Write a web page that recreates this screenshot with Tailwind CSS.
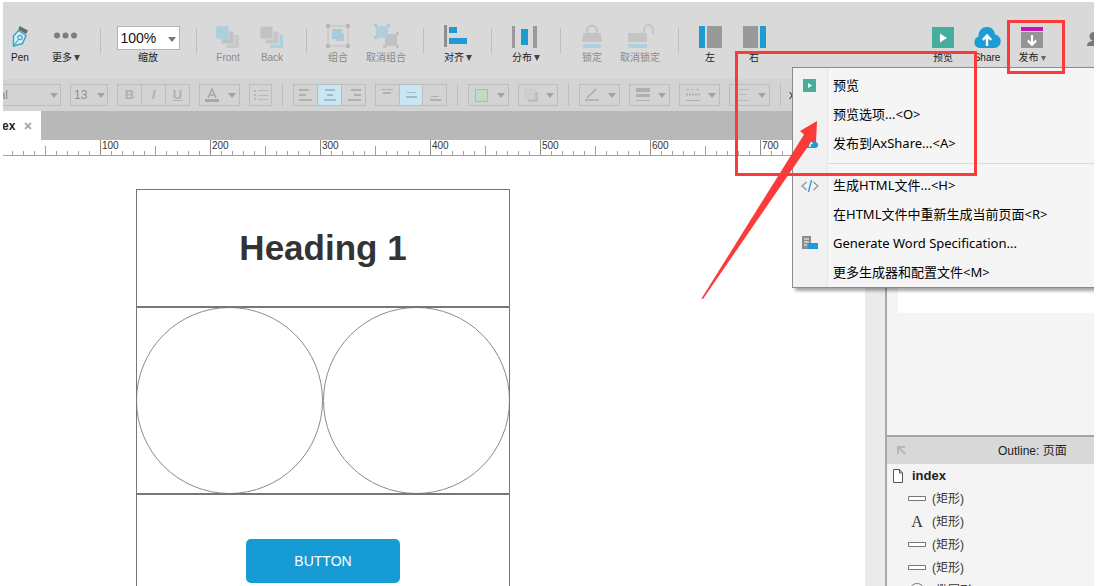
<!DOCTYPE html>
<html lang="zh-CN">
<head>
<meta charset="utf-8">
<title>index</title>
<script src="https://cdn.jsdelivr.net/npm/@tailwindcss/browser@4"></script>
</head>
<body class="h-screen overflow-hidden bg-white pt-[2px] pr-[5px] pl-[3px] font-['Liberation_Sans','Noto_Sans_CJK_SC',sans-serif] text-[#222]">
<div class="relative flex h-full flex-col overflow-hidden">

  <!-- Main toolbar -->
  <header class="flex h-[77px] shrink-0 items-start bg-[#d9d9d9] pt-[20px] text-[10px] leading-[14px] whitespace-nowrap">
    <button class="flex w-[34px] shrink-0 flex-col items-center gap-[2px]">
      <svg class="h-[27px] w-[20px]" viewBox="0 0 20 27"><path d="M9.500 4l8.500 4.500-2 3.500-7.500-4.500z" fill="#6b6b6b"/><path d="M8.500 8.500L3.500 14 3.500 24l9-2.500 3.500-8z" fill="#d9eef5" stroke="#3aa6cf" stroke-width="1.500"/><path d="M3.500 24l5-6.500" stroke="#3aa6cf" stroke-width="1.200"/><circle cx="10" cy="15.500" r="2.200" fill="none" stroke="#3aa6cf" stroke-width="1.200"/></svg>
      <span>Pen</span>
    </button>
    <button class="flex w-[58px] shrink-0 flex-col items-center gap-[2px]">
      <svg class="h-[27px] w-[24px]" viewBox="0 0 24 27" fill="#7c7c7c"><circle cx="3" cy="13.500" r="3"/><circle cx="11.500" cy="13.500" r="3"/><circle cx="20" cy="13.500" r="3"/></svg>
      <span class="flex items-center gap-[2px]">更多<svg class="h-[6px] w-[6px]" viewBox="0 0 6 6"><path d="M0 0h6L3 6z" fill="#444"/></svg></span>
    </button>
    <div class="flex w-[11px] shrink-0 justify-center pt-[6px]"><i class="h-[25px] w-px bg-[#bdbdbd]"></i></div>
    <div class="flex w-[84px] shrink-0 flex-col items-center pt-[4px]">
      <div class="relative">
        <select id="zoom" class="h-[24px] w-[63px] appearance-none border border-[#b4b4b4] bg-white pl-[3px] text-[14px] text-[#111]"><option>100%</option></select>
        <svg class="pointer-events-none absolute top-[11px] right-[4px] h-[5px] w-[8px]" viewBox="0 0 8 5"><path d="M0 0h8L4 5z" fill="#777"/></svg>
      </div>
      <label for="zoom" class="mt-[1px]">缩放</label>
    </div>
    <div class="flex w-[12px] shrink-0 justify-center pt-[6px]"><i class="h-[25px] w-px bg-[#bdbdbd]"></i></div>
    <button class="flex w-[52px] shrink-0 flex-col items-center gap-[2px] text-[#8a8a8a]">
      <svg class="h-[27px] w-[24px]" viewBox="0 0 24 27"><path d="M10 13h13v13H10z" fill="#c9c9c9"/><path d="M5 9h13v13H5z" fill="#c1c1c1" stroke="#d9d9d9"/><path d="M0 4h13v13H0z" fill="#a9cfe0" stroke="#d9d9d9" stroke-width=".5"/></svg>
      <span>Front</span>
    </button>
    <button class="flex w-[36px] shrink-0 flex-col items-center gap-[2px] text-[#8a8a8a]">
      <svg class="h-[27px] w-[24px]" viewBox="0 0 24 27"><path d="M10 13h13v13H10z" fill="#a9d3e3"/><path d="M5 9h14v13H5z" fill="#c6c6c6" stroke="#d9d9d9"/><path d="M0 4h13v13H0z" fill="#c2c2c2" stroke="#d9d9d9"/></svg>
      <span>Back</span>
    </button>
    <div class="flex w-[32px] shrink-0 justify-center pt-[6px]"><i class="h-[25px] w-px bg-[#bdbdbd]"></i></div>
    <button class="flex w-[32px] shrink-0 flex-col items-center gap-[2px] text-[#8a8a8a]">
      <svg class="h-[27px] w-[24px]" viewBox="0 0 24 27"><path d="M2 4h20v20H2z" fill="none" stroke="#bfbfbf"/><g fill="#b8b8b8"><path d="M0 2h4v4H0zM20 2h4v4h-4zM0 22h4v4H0zM20 22h4v4h-4z"/></g><path d="M10 11h8v8h-8z" fill="#bcc7cc"/><path d="M6 7h10v10H6z" fill="#a6cddd"/></svg>
      <span>组合</span>
    </button>
    <button class="flex w-[64px] shrink-0 flex-col items-center gap-[2px] text-[#8a8a8a]">
      <svg class="h-[27px] w-[26px]" viewBox="0 0 26 27"><path d="M12 12h12v12H12z" fill="#c2c2c2"/><path d="M3 4h12v12H3z" fill="#b1d0dc"/><g fill="#b5c6cd"><path d="M1 2h3v3H1zM14 2h3v3h-3zM1 14h3v3H1zM14 14h3v3h-3z"/></g><path d="M23 10h3v3h-3zM10 23h3v3h-3zM23 23h3v3h-3z" fill="#bfbfbf"/></svg>
      <span>取消组合</span>
    </button>
    <div class="flex w-[11px] shrink-0 justify-center pt-[6px]"><i class="h-[25px] w-px bg-[#bdbdbd]"></i></div>
    <button class="flex w-[58px] shrink-0 flex-col items-center gap-[2px]">
      <svg class="h-[27px] w-[28px]" viewBox="0 0 28 27"><path d="M0 3h3v22H0z" fill="#8f8f8f"/><path d="M5 5h8v6H5zM5 16h18v6H5z" fill="#1e9bd2"/></svg>
      <span class="flex items-center gap-[2px]">对齐<svg class="h-[6px] w-[6px]" viewBox="0 0 6 6"><path d="M0 0h6L3 6z" fill="#444"/></svg></span>
    </button>
    <div class="flex w-[9px] shrink-0 justify-center pt-[6px]"><i class="h-[25px] w-px bg-[#bdbdbd]"></i></div>
    <button class="flex w-[60px] shrink-0 flex-col items-center gap-[2px]">
      <svg class="h-[27px] w-[28px]" viewBox="0 0 28 27"><path d="M0 4h3v22H0zM21 4h4v22h-4z" fill="#999"/><path d="M9 7h7v16H9z" fill="#1e9bd2"/></svg>
      <span class="flex items-center gap-[2px]">分布<svg class="h-[6px] w-[6px]" viewBox="0 0 6 6"><path d="M0 0h6L3 6z" fill="#444"/></svg></span>
    </button>
    <div class="flex w-[9px] shrink-0 justify-center pt-[6px]"><i class="h-[25px] w-px bg-[#bdbdbd]"></i></div>
    <button class="flex w-[54px] shrink-0 flex-col items-center gap-[2px] text-[#8a8a8a]">
      <svg class="h-[27px] w-[22px]" viewBox="0 0 22 27"><path d="M6 12V9a5 5.500 0 0 1 10 0v3" fill="none" stroke="#c3c3c3" stroke-width="2"/><path d="M2 11h18l1 9H1z" fill="#c4c4c4"/><path d="M2 22h18v4H2z" fill="#afd0dc"/></svg>
      <span>锁定</span>
    </button>
    <button class="flex w-[42px] shrink-0 flex-col items-center gap-[2px] text-[#8a8a8a]">
      <svg class="h-[27px] w-[28px]" viewBox="0 0 28 27"><path d="M18 12V8a4.500 5 0 0 1 9 0v4" fill="none" stroke="#c6c6c6" stroke-width="2"/><path d="M2 11h19v9H2z" fill="#c4c4c4"/><path d="M2 22h19v4H2z" fill="#afd0dc"/></svg>
      <span>取消锁定</span>
    </button>
    <div class="flex w-[34px] shrink-0 justify-center pt-[6px]"><i class="h-[25px] w-px bg-[#bdbdbd]"></i></div>
    <button class="flex w-[30px] shrink-0 flex-col items-center gap-[2px]">
      <svg class="h-[27px] w-[24px]" viewBox="0 0 24 27"><path d="M1 4h6v22H1z" fill="#1e9bd2"/><path d="M9 4h15v22H9z" fill="#999"/></svg>
      <span>左</span>
    </button>
    <button class="flex w-[58px] shrink-0 flex-col items-center gap-[2px]">
      <svg class="h-[27px] w-[24px]" viewBox="0 0 24 27"><path d="M1 4h15v22H1z" fill="#999"/><path d="M18 4h6v22h-6z" fill="#1e9bd2"/></svg>
      <span>右</span>
    </button>
    <div class="flex-1"></div>
    <button class="flex w-[44px] shrink-0 flex-col items-center gap-[2px]">
      <svg class="h-[27px] w-[22px]" viewBox="0 0 22 27"><path d="M0 5h22v21H0z" fill="#47ad9c"/><path d="M8 11.500l7 4.500-7 4.500z" fill="#fff"/></svg>
      <span>预览</span>
    </button>
    <button class="flex w-[44px] shrink-0 flex-col items-center gap-[2px]">
      <svg class="h-[27px] w-[28px]" viewBox="0 0 28 27"><path d="M6 26a6 6 0 0 1-.5-11.500C5.500 8 9.500 5 14 5c4 0 7.500 2.500 8 7.500A6.800 6.800 0 0 1 21.500 26z" fill="#1e9bd2"/><path d="M14 24v-9M9.800 18l4.200-4.500 4.200 4.500" fill="none" stroke="#fff" stroke-width="2.400"/></svg>
      <span>Share</span>
    </button>
    <button class="flex w-[46px] shrink-0 flex-col items-center gap-[2px]">
      <svg class="h-[27px] w-[22px]" viewBox="0 0 22 27"><path d="M0 5h22v4H0z" fill="#c513b4"/><path d="M0 10h22v16H0z" fill="#949494"/><path d="M11 13v9M6.800 18.500l4.200 4.200 4.200-4.200" fill="none" stroke="#fff" stroke-width="2.200"/></svg>
      <span class="flex items-center gap-[2px]">发布<svg class="h-[5px] w-[5px]" viewBox="0 0 6 6"><path d="M0 0h6L3 6z" fill="#666"/></svg></span>
    </button>
    <button class="flex w-[39px] shrink-0 justify-end overflow-hidden" aria-label="Account">
      <svg class="h-[27px] w-[7px]" viewBox="0 0 7 27"><circle cx="7" cy="14.500" r="4.500" fill="#777"/><path d="M0 24c0-4 3-5 7-5v5z" fill="#777"/></svg>
    </button>
  </header>

  <!-- Formatting bar -->
  <div class="flex h-[32px] shrink-0 items-center gap-[9px] bg-[#d3d3d3] text-[13px] text-[#8f8f8f]">
    <div class="relative -ml-[26px] shrink-0">
      <select aria-label="Font" class="block h-[22px] w-[84px] appearance-none border border-[#bcbcbc] pl-[6px] text-[12px]"><option>Arial</option></select>
      <svg class="pointer-events-none absolute top-[9px] right-[3px] h-[5px] w-[8px]" viewBox="0 0 8 5"><path d="M0 0h8L4 5z" fill="#a3a3a3"/></svg>
    </div>
    <div class="relative shrink-0">
      <select aria-label="Size" class="block h-[22px] w-[38px] appearance-none border border-[#bcbcbc] pl-[3px] text-[12px]"><option>13</option></select>
      <svg class="pointer-events-none absolute top-[9px] right-[3px] h-[5px] w-[8px]" viewBox="0 0 8 5"><path d="M0 0h8L4 5z" fill="#a3a3a3"/></svg>
    </div>
    <div class="flex h-[22px] w-[73px] shrink-0 divide-x divide-[#bcbcbc] border border-[#bcbcbc] leading-[20px] text-[#b0b0b0]">
      <button class="flex-1 font-bold">B</button>
      <button class="flex-1 font-bold italic">I</button>
      <button class="flex-1 font-bold underline">U</button>
    </div>
    <button aria-label="Text color" class="flex h-[22px] w-[41px] shrink-0 items-center justify-between border border-[#bcbcbc] pr-[3px] pl-[5px]">
      <svg class="h-[16px] w-[14px]" viewBox="0 0 14 16"><path d="M3 11L7 2l4 9M4.500 8h5" fill="none" stroke="#a5a5a5" stroke-width="1.500"/><path d="M0 12h14v3H0z" fill="#a8a8a8"/></svg>
      <svg class="h-[5px] w-[8px]" viewBox="0 0 8 5"><path d="M0 0h8L4 5z" fill="#a3a3a3"/></svg>
    </button>
    <button aria-label="List" class="flex h-[22px] w-[23px] shrink-0 items-center justify-center border border-[#bcbcbc]">
      <svg class="h-[12px] w-[14px]" viewBox="0 0 14 12" fill="#b8b8b8"><path d="M0 1h2v2H0zM4 1h10v1H4zM0 5h2v2H0zM4 6h10v1H4zM0 9h2v2H0zM4 10h10v1H4z"/></svg>
    </button>
    <div class="flex w-[3px] shrink-0 justify-center"><i class="h-[22px] w-px bg-[#bdbdbd]"></i></div>
    <div class="flex h-[22px] w-[73px] shrink-0 divide-x divide-[#bcbcbc] border border-[#bcbcbc]">
      <button aria-label="Align left" class="flex flex-1 items-center justify-center"><svg class="h-[14px] w-[14px]" viewBox="0 0 14 14" fill="#b0b0b0"><path d="M0 1h10v2H0zM0 6h7v2H0zM0 11h13v2H0z"/></svg></button>
      <button aria-label="Align center" class="flex flex-1 items-center justify-center bg-[#c8e6f3]"><svg class="h-[14px] w-[14px]" viewBox="0 0 14 14" fill="#a5bac3"><path d="M2 1h10v2H2zM4 6h6v2H4zM1 11h12v2H1z"/></svg></button>
      <button aria-label="Align right" class="flex flex-1 items-center justify-center"><svg class="h-[14px] w-[14px]" viewBox="0 0 14 14" fill="#b0b0b0"><path d="M4 1h10v2H4zM7 6h7v2H7zM1 11h13v2H1z"/></svg></button>
    </div>
    <div class="flex h-[22px] w-[72px] shrink-0 divide-x divide-[#bcbcbc] border border-[#bcbcbc]">
      <button aria-label="Align top" class="flex flex-1 items-center justify-center"><svg class="h-[14px] w-[14px]" viewBox="0 0 14 14" fill="#b0b0b0"><path d="M1 1h12v1H1zM3 4h8v2H3z"/></svg></button>
      <button aria-label="Align middle" class="flex flex-1 items-center justify-center bg-[#c8e6f3]"><svg class="h-[14px] w-[14px]" viewBox="0 0 14 14" fill="#a5bac3"><path d="M3 4h9v1H3zM2 8h11v2H2z"/></svg></button>
      <button aria-label="Align bottom" class="flex flex-1 items-center justify-center"><svg class="h-[14px] w-[14px]" viewBox="0 0 14 14" fill="#b0b0b0"><path d="M3 8h8v1H3zM2 11h11v2H2z"/></svg></button>
    </div>
    <div class="flex w-[3px] shrink-0 justify-center"><i class="h-[22px] w-px bg-[#bdbdbd]"></i></div>
    <button aria-label="Fill" class="flex h-[22px] w-[41px] shrink-0 items-center justify-between border border-[#bcbcbc] pr-[3px] pl-[6px]">
      <i class="size-[13px] border border-[#a9bfae] bg-[#bcdcc3]"></i>
      <svg class="h-[5px] w-[8px]" viewBox="0 0 8 5"><path d="M0 0h8L4 5z" fill="#a3a3a3"/></svg>
    </button>
    <button aria-label="Shadow" class="flex h-[22px] w-[40px] shrink-0 items-center justify-between border border-[#bcbcbc] pr-[3px] pl-[6px]">
      <svg class="h-[13px] w-[13px]" viewBox="0 0 13 13"><path d="M3 3h10v10H3z" fill="#bdbdbd"/><path d="M0 0h10v10H0z" fill="#cfcfcf" stroke="#c6c6c6"/></svg>
      <svg class="h-[5px] w-[8px]" viewBox="0 0 8 5"><path d="M0 0h8L4 5z" fill="#a3a3a3"/></svg>
    </button>
    <div class="flex w-[3px] shrink-0 justify-center"><i class="h-[22px] w-px bg-[#bdbdbd]"></i></div>
    <button aria-label="Line color" class="flex h-[22px] w-[41px] shrink-0 items-center justify-between border border-[#bcbcbc] pr-[3px] pl-[5px]">
      <svg class="h-[14px] w-[14px]" viewBox="0 0 14 14"><path d="M2 10L11 1" stroke="#a9a9a9" stroke-width="1.500"/><path d="M0 11h14v2H0z" fill="#b5b5b5"/></svg>
      <svg class="h-[5px] w-[8px]" viewBox="0 0 8 5"><path d="M0 0h8L4 5z" fill="#a3a3a3"/></svg>
    </button>
    <button aria-label="Line width" class="flex h-[22px] w-[41px] shrink-0 items-center justify-between border border-[#bcbcbc] pr-[3px] pl-[6px]">
      <svg class="h-[14px] w-[14px]" viewBox="0 0 14 14" fill="#b0b0b0"><path d="M0 0h14v4H0zM0 6h14v3H0zM0 12h14v1H0z"/></svg>
      <svg class="h-[5px] w-[8px]" viewBox="0 0 8 5"><path d="M0 0h8L4 5z" fill="#a3a3a3"/></svg>
    </button>
    <button aria-label="Line style" class="flex h-[22px] w-[41px] shrink-0 items-center justify-between border border-[#bcbcbc] pr-[3px] pl-[6px]">
      <svg class="h-[14px] w-[14px]" viewBox="0 0 14 14" stroke="#b0b0b0"><path d="M0 1.500h14" stroke-dasharray="3 2"/><path d="M0 6.500h14" stroke-width="2" stroke-dasharray="2 1"/><path d="M0 12.500h14"/></svg>
      <svg class="h-[5px] w-[8px]" viewBox="0 0 8 5"><path d="M0 0h8L4 5z" fill="#a3a3a3"/></svg>
    </button>
    <button aria-label="Arrow style" class="flex h-[22px] w-[41px] shrink-0 items-center justify-between border border-[#bcbcbc] pr-[3px] pl-[6px]">
      <svg class="h-[14px] w-[14px]" viewBox="0 0 14 14" fill="#b9b9b9"><path d="M1 1h12v1H1zM3 6h8v1H3zM1 12h12v1H1z"/></svg>
      <svg class="h-[5px] w-[8px]" viewBox="0 0 8 5"><path d="M0 0h8L4 5z" fill="#a3a3a3"/></svg>
    </button>
    <div class="flex w-[3px] shrink-0 justify-center"><i class="h-[22px] w-px bg-[#bdbdbd]"></i></div>
    <span class="-ml-[2px] text-[12px] text-[#333]">x:</span>
  </div>

  <div class="flex min-h-0 flex-1">
    <!-- Page editor -->
    <div class="flex min-w-0 flex-1 flex-col">
      <div class="flex h-[29px] shrink-0 bg-[#b8b8b8]">
        <div class="-ml-[28px] flex w-[66px] shrink-0 items-center gap-[9px] bg-white pl-[9px] text-[12px] font-bold">
          <span>index</span>
          <button aria-label="Close tab"><svg class="h-[8px] w-[8px]" viewBox="0 0 8 8"><path d="M1 1l6 6M7 1L1 7" stroke="#aaa" stroke-width="1.800"/></svg></button>
        </div>
      </div>
      <div class="flex min-h-0 flex-1">
        <div class="flex min-w-0 flex-1 flex-col overflow-hidden">
          <svg class="hidden"><defs><symbol id="ticks" viewBox="0 0 110 16"><path d="M.5 0v16" stroke="#8c8c8c"/><path d="M55.500 6v10" stroke="#a0a0a0"/><path d="M11.500 11v5M22.500 11v5M33.500 11v5M44.500 11v5M66.500 11v5M77.500 11v5M88.500 11v5M99.500 11v5" stroke="#a8a8a8"/></symbol></defs></svg>
          <div class="flex h-[16px] shrink-0 overflow-hidden border-b border-[#a0a0a0] text-[10px] leading-[12px] text-[#333]">
            <div class="flex w-[97px] shrink-0 justify-end overflow-hidden"><svg class="h-[16px] w-[110px] shrink-0"><use href="#ticks"/></svg></div>
            <div class="relative h-[16px] w-[110px] shrink-0 pl-[2px]"><svg class="absolute inset-0 h-[16px] w-[110px]"><use href="#ticks"/></svg>100</div>
            <div class="relative h-[16px] w-[110px] shrink-0 pl-[2px]"><svg class="absolute inset-0 h-[16px] w-[110px]"><use href="#ticks"/></svg>200</div>
            <div class="relative h-[16px] w-[110px] shrink-0 pl-[2px]"><svg class="absolute inset-0 h-[16px] w-[110px]"><use href="#ticks"/></svg>300</div>
            <div class="relative h-[16px] w-[110px] shrink-0 pl-[2px]"><svg class="absolute inset-0 h-[16px] w-[110px]"><use href="#ticks"/></svg>400</div>
            <div class="relative h-[16px] w-[110px] shrink-0 pl-[2px]"><svg class="absolute inset-0 h-[16px] w-[110px]"><use href="#ticks"/></svg>500</div>
            <div class="relative h-[16px] w-[110px] shrink-0 pl-[2px]"><svg class="absolute inset-0 h-[16px] w-[110px]"><use href="#ticks"/></svg>600</div>
            <div class="relative h-[16px] w-[110px] shrink-0 pl-[2px]"><svg class="absolute inset-0 h-[16px] w-[110px]"><use href="#ticks"/></svg>700</div>
          </div>
          <main class="flex-1 overflow-hidden bg-white pt-[33px] pl-[133px]">
            <div class="w-[374px]">
              <section class="flex h-[118px] items-center justify-center border border-[#777]">
                <h1 class="text-[35px] font-bold text-[#333]">Heading 1</h1>
              </section>
              <section class="flex h-[187px] border border-[#777]">
                <svg class="h-[185px] w-[372px]" viewBox="0 0 372 185" fill="none" stroke="#8a8a8a"><circle cx="92.500" cy="92.500" r="93"/><circle cx="279.500" cy="92.500" r="93"/></svg>
              </section>
              <section class="flex h-[187px] items-start justify-center border border-[#777] pt-[44px]">
                <button class="h-[44px] w-[154px] rounded-[5px] bg-[#169bd5] text-[14px] text-white">BUTTON</button>
              </section>
            </div>
          </main>
        </div>
        <div class="w-[20px] shrink-0 bg-[#ebebeb]"></div>
      </div>
    </div>

    <!-- Side panels -->
    <aside class="flex w-[209px] shrink-0 flex-col border-l-2 border-[#a9a9a9] bg-[#f4f4f4]">
      <div class="h-[324px] shrink-0 pl-[11px]"><div class="h-[202px] bg-white"></div></div>
      <div class="flex h-[29px] shrink-0 items-center border-t-2 border-[#a6a6a6] bg-[#d8d8d8] pl-[10px] text-[12px]">
        <svg class="h-[9px] w-[9px]" viewBox="0 0 9 9"><path d="M1 8V1h7M2 2l6 6" fill="none" stroke="#b8b8b8" stroke-width="2"/></svg>
        <h2 class="ml-[92px] whitespace-nowrap">Outline: 页面</h2>
      </div>
      <div class="flex h-[23px] shrink-0 items-center gap-[9px] pl-[6px] text-[13px] font-bold">
        <svg class="h-[14px] w-[10px]" viewBox="0 0 10 14"><path d="M.5.500h6l3 3.500v9.500h-9zM6.500.500v3.500h3" fill="#fff" stroke="#555"/></svg>index
      </div>
      <ul class="shrink-0 text-[12px] text-[#333]">
        <li class="flex h-[23px] items-center gap-[6px] pl-[21px]"><svg class="h-[5px] w-[18px]" viewBox="0 0 18 5"><path d="M.5.500h17v4H.5z" fill="#fff" stroke="#777"/></svg>(矩形)</li>
        <li class="flex h-[23px] items-center gap-[6px] pl-[21px]"><span class="w-[18px] text-center font-['Liberation_Serif',serif] text-[16px]">A</span>(矩形)</li>
        <li class="flex h-[23px] items-center gap-[6px] pl-[21px]"><svg class="h-[5px] w-[18px]" viewBox="0 0 18 5"><path d="M.5.500h17v4H.5z" fill="#fff" stroke="#777"/></svg>(矩形)</li>
        <li class="flex h-[23px] items-center gap-[6px] pl-[21px]"><svg class="h-[5px] w-[18px]" viewBox="0 0 18 5"><path d="M.5.500h17v4H.5z" fill="#fff" stroke="#777"/></svg>(矩形)</li>
        <li class="flex h-[23px] items-center gap-[6px] pl-[21px]"><svg class="h-[16px] w-[18px]" viewBox="0 0 18 16"><circle cx="9" cy="8" r="7.500" fill="#fff" stroke="#777"/></svg>(椭圆形)</li>
      </ul>
    </aside>
  </div>

  <!-- Publish menu -->
  <div role="menu" class="absolute top-[65px] right-0 w-[302px] border-y border-l border-[#8c8c8c] bg-[#f5f5f5] pt-[3px] font-['Noto_Sans','Noto_Sans_CJK_SC',sans-serif] text-[13px] text-black shadow-[3px_3px_3px_rgba(0,0,0,0.35)]">
    <div class="absolute inset-y-0 left-0 w-[35px] border-r border-[#e6e6e6] bg-[#f1f1f1]"></div>
    <div class="relative">
      <button role="menuitem" class="flex h-[29px] w-full items-center gap-[15px] pl-[9px]"><svg class="h-[16px] w-[16px]" viewBox="0 0 16 16"><path d="M1 1h13v13H1z" fill="#47ad9c"/><path d="M6 5l4 2.500L6 10z" fill="#fff"/></svg>预览</button>
      <button role="menuitem" class="flex h-[29px] w-full items-center pl-[40px]">预览选项...&lt;O&gt;</button>
      <button role="menuitem" class="flex h-[29px] w-full items-center gap-[15px] pl-[9px]"><svg class="h-[16px] w-[16px]" viewBox="0 0 16 16"><path d="M4 12a3.500 3.500 0 0 1-.5-7C4 2.500 6 2 8 2c2.500 0 4.500 1.500 5 4a3 3 0 0 1 0 6z" fill="#1e9bd2"/><path d="M8 11V6M5.500 8L8 5.500 10.500 8" fill="none" stroke="#fff" stroke-width="1.500"/></svg>发布到AxShare...&lt;A&gt;</button>
      <div class="flex h-[13px] items-start pt-[5px] pl-[36px]"><i class="h-px flex-1 bg-[#d5dbe0]"></i></div>
      <button role="menuitem" class="flex h-[29px] w-full items-center gap-[14px] pl-[8px]"><svg class="h-[12px] w-[18px]" viewBox="0 0 18 12" fill="none" stroke-width="1.500"><path d="M5.500 2L1 6l4.500 4M12.500 2L17 6l-4.500 4" stroke="#999"/><path d="M10.500 0l-3 12" stroke="#3aa3d6"/></svg>生成HTML文件...&lt;H&gt;</button>
      <button role="menuitem" class="flex h-[29px] w-full items-center pl-[40px]">在HTML文件中重新生成当前页面&lt;R&gt;</button>
      <button role="menuitem" class="flex h-[29px] w-full items-center gap-[15px] pl-[9px]"><svg class="h-[16px] w-[16px]" viewBox="0 0 16 16"><path d="M0 0h9v13H0z" fill="#8c8c8c"/><path d="M2 3h5M2 6h5M2 9h3" stroke="#fff"/><path d="M6 7h10v6H6z" fill="#1e9bd2"/></svg>Generate Word Specification...</button>
      <button role="menuitem" class="flex h-[29px] w-full items-center pl-[40px]">更多生成器和配置文件&lt;M&gt;</button>
    </div>
  </div>

  <!-- Callouts drawn over the window -->
  <svg class="pointer-events-none absolute top-0 right-0 h-[300px] w-[400px]" viewBox="694 2 400 300" aria-hidden="true">
    <rect x="736.500" y="52.500" width="239" height="122" fill="none" stroke="#fb3a3a" stroke-width="3"/>
    <rect x="1008.500" y="21.500" width="55" height="51" fill="none" stroke="#fb3a3a" stroke-width="3"/>
    <path d="M817 121L800 131l4 3.500L701.500 298.500l1.500.5L812 140.500l4 2.500z" fill="#fb3a3a"/>
  </svg>
</div>
</body>
</html>
